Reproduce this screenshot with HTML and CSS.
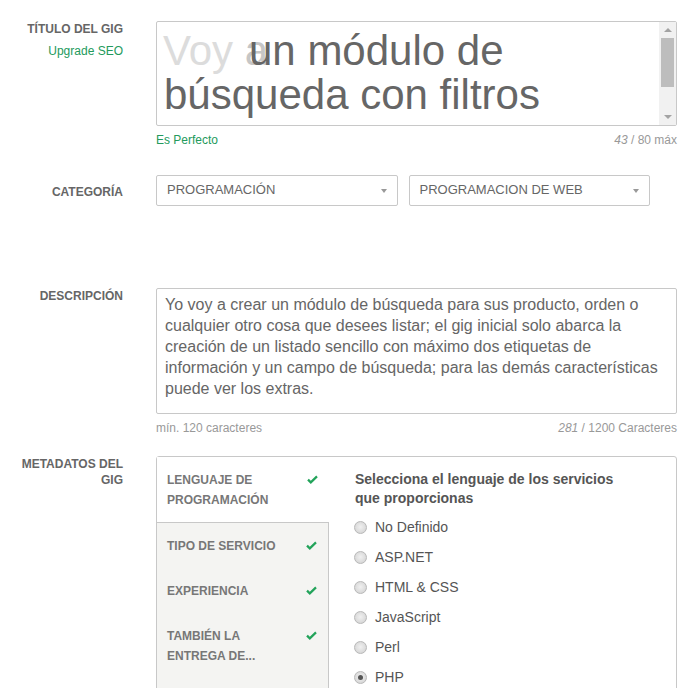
FILE: index.html
```html
<!DOCTYPE html>
<html lang="es">
<head>
<meta charset="utf-8">
<title>Gig</title>
<link rel="stylesheet" href="styles.css">
</head>
<body>
<div class="form">
  <div class="row row-title">
    <div class="label">
      <div>TÍTULO DEL GIG</div>
      <div class="upgrade">Upgrade SEO</div>
    </div>
    <div class="field">
      <div class="title-box">
        <div class="title-text"><span class="prefix">Voy <span class="prefix-a">a</span></span><span class="title-main">un módulo de búsqueda con filtros</span></div>
        <div class="scrollbar">
          <span class="sb-btn"><span class="tri-up"></span></span>
          <span class="sb-thumb"></span>
          <span class="sb-track"></span>
          <span class="sb-btn"><span class="tri-down"></span></span>
        </div>
      </div>
      <div class="hints"><span class="ok">Es Perfecto</span><span class="count"><em>43</em> / 80 máx</span></div>
    </div>
  </div>

  <div class="row row-cat">
    <div class="label label-cat">CATEGORÍA</div>
    <div class="field selects">
      <div class="select"><span>PROGRAMACIÓN</span><span class="tri-down sel-arrow"></span></div>
      <div class="select"><span>PROGRAMACION DE WEB</span><span class="tri-down sel-arrow"></span></div>
    </div>
  </div>

  <div class="row row-desc">
    <div class="label">DESCRIPCIÓN</div>
    <div class="field">
      <div class="desc-box">Yo voy a crear un módulo de búsqueda para sus producto, orden o cualquier otro cosa que desees listar; el gig inicial solo abarca la creación de un listado sencillo con máximo dos etiquetas de información y un campo de búsqueda; para las demás características puede ver los extras.</div>
      <div class="hints"><span class="muted">mín. 120 caracteres</span><span class="count"><em>281</em> / 1200 Caracteres</span></div>
    </div>
  </div>

  <div class="row row-meta">
    <div class="label">METADATOS DEL<br>GIG</div>
    <div class="field">
      <div class="meta-box">
        <div class="tabs">
          <div class="tab active"><span class="tab-label">LENGUAJE DE PROGRAMACIÓN</span><svg class="check" width="11" height="9" viewBox="0 0 11 9"><path d="M1 4.6 L3.8 7.4 L10 1.4" fill="none" stroke="#22a35a" stroke-width="2.2"/></svg></div>
          <div class="tab"><span class="tab-label">TIPO DE SERVICIO</span><svg class="check" width="11" height="9" viewBox="0 0 11 9"><path d="M1 4.6 L3.8 7.4 L10 1.4" fill="none" stroke="#22a35a" stroke-width="2.2"/></svg></div>
          <div class="tab"><span class="tab-label">EXPERIENCIA</span><svg class="check" width="11" height="9" viewBox="0 0 11 9"><path d="M1 4.6 L3.8 7.4 L10 1.4" fill="none" stroke="#22a35a" stroke-width="2.2"/></svg></div>
          <div class="tab"><span class="tab-label">TAMBIÉN LA ENTREGA DE...</span><svg class="check" width="11" height="9" viewBox="0 0 11 9"><path d="M1 4.6 L3.8 7.4 L10 1.4" fill="none" stroke="#22a35a" stroke-width="2.2"/></svg></div>
        </div>
        <div class="meta-content">
          <div class="meta-heading">Selecciona el lenguaje de los servicios que proporcionas</div>
          <div class="radio"><span class="dot"></span>No Definido</div>
          <div class="radio"><span class="dot"></span>ASP.NET</div>
          <div class="radio"><span class="dot"></span>HTML &amp; CSS</div>
          <div class="radio"><span class="dot"></span>JavaScript</div>
          <div class="radio"><span class="dot"></span>Perl</div>
          <div class="radio"><span class="dot checked"></span>PHP</div>
        </div>
      </div>
    </div>
  </div>
</div>
</body>
</html>
```

FILE: styles.css
```css
* { box-sizing: border-box; }
html, body { margin: 0; padding: 0; background: #fff; }
body {
  font-family: "Liberation Sans", Arial, sans-serif;
  color: #666;
  overflow: hidden;
}
.form { padding: 21px 10px 0 0; width: 687px; }
.row {
  display: grid;
  grid-template-columns: 123px 521px;
  column-gap: 33px;
}
.label {
  font-size: 12px;
  font-weight: bold;
  line-height: 16px;
  color: #666;
  text-align: right;
}
.upgrade {
  margin-top: 6px;
  font-weight: normal;
  color: #239a5c;
}
.row-cat { margin-top: 27px; }
.row-desc { margin-top: 82px; }
.row-meta { margin-top: 20px; }
.label-cat { padding-top: 9px; }

/* title */
.title-box {
  height: 105px;
  border: 1px solid #c8c8c8;
  border-radius: 2px;
  display: flex;
}
.title-text {
  position: relative;
  flex: 1;
  padding: 7px 0 0 7px;
  font-size: 42px;
  line-height: 44px;
  color: #666;
  text-indent: 85px;
  overflow: hidden;
}
.prefix {
  position: absolute;
  left: 6px;
  top: 7px;
  text-indent: 0;
  color: #dcdcdc;
  z-index: 0;
  white-space: nowrap;
}
.prefix-a { color: #c6c6c6; }
.title-main { position: relative; z-index: 1; }
.scrollbar {
  width: 17px;
  display: flex;
  flex-direction: column;
  background: #f1f1f1;
}
.sb-btn {
  height: 16px;
  display: flex;
  align-items: center;
  justify-content: center;
}
.sb-thumb {
  height: 49px;
  margin: 0 2px;
  background: #bdbdbd;
}
.sb-track { flex: 1; }
.tri-up {
  width: 0; height: 0;
  border-left: 4px solid transparent;
  border-right: 4px solid transparent;
  border-bottom: 4px solid #a3a3a3;
}
.tri-down {
  width: 0; height: 0;
  border-left: 4px solid transparent;
  border-right: 4px solid transparent;
  border-top: 4px solid #a3a3a3;
}

.hints {
  display: flex;
  justify-content: space-between;
  margin-top: 6px;
  font-size: 12px;
  line-height: 16px;
  color: #999;
}
.hints em { font-style: italic; }
.ok { color: #239a5c; }
.muted { color: #999; }

/* selects */
.selects {
  display: flex;
  gap: 11px;
  padding-right: 27px;
}
.select {
  flex: 1;
  height: 31px;
  border: 1px solid #c8c8c8;
  border-radius: 2px;
  display: flex;
  align-items: center;
  justify-content: space-between;
  padding: 0 10px 2px 10px;
  font-size: 13px;
  color: #666;
}
.sel-arrow { border-top-color: #999; border-left-width: 3.5px; border-right-width: 3.5px; margin-top: 2px; }

/* description */
.desc-box {
  height: 126px;
  border: 1px solid #c8c8c8;
  border-radius: 2px;
  padding: 5px 8px;
  font-size: 16px;
  line-height: 21px;
  color: #666;
}

/* meta */
.meta-box {
  border: 1px solid #c8c8c8;
  border-radius: 3px;
  display: flex;
  min-height: 300px;
}
.tabs {
  width: 172px;
  background: #f4f4f2;
  border-right: 1px solid #c8c8c8;
}
.tab {
  display: flex;
  justify-content: space-between;
  align-items: flex-start;
  padding: 13px 11px 12px 10px;
  font-size: 12px;
  font-weight: bold;
  line-height: 20px;
  color: #777;
}
.tab.active {
  background: #fff;
  margin-right: -1px;
  border-bottom: 1px solid #c8c8c8;
}
.tab-label { max-width: 125px; }
.check { margin-top: 5px; flex: none; }
.meta-content {
  flex: 1;
  padding: 13px 20px 0 26px;
}
.meta-heading {
  font-size: 14px;
  font-weight: bold;
  line-height: 19px;
  color: #555;
  width: 280px;
  margin-bottom: 4px;
}
.radio {
  display: flex;
  align-items: center;
  height: 30px;
  font-size: 14px;
  color: #555;
}
.dot {
  width: 13px;
  height: 13px;
  border-radius: 50%;
  margin: 0 8px 0 -1px;
  border: 1px solid #b8b8b8;
  background: radial-gradient(circle at 50% 45%, #f0f0f0 0, #dedede 55%, #cfcfcf 100%);
  position: relative;
}
.dot.checked::after {
  content: "";
  position: absolute;
  left: 3px;
  top: 3px;
  width: 5px;
  height: 5px;
  border-radius: 50%;
  background: #555;
}
```
